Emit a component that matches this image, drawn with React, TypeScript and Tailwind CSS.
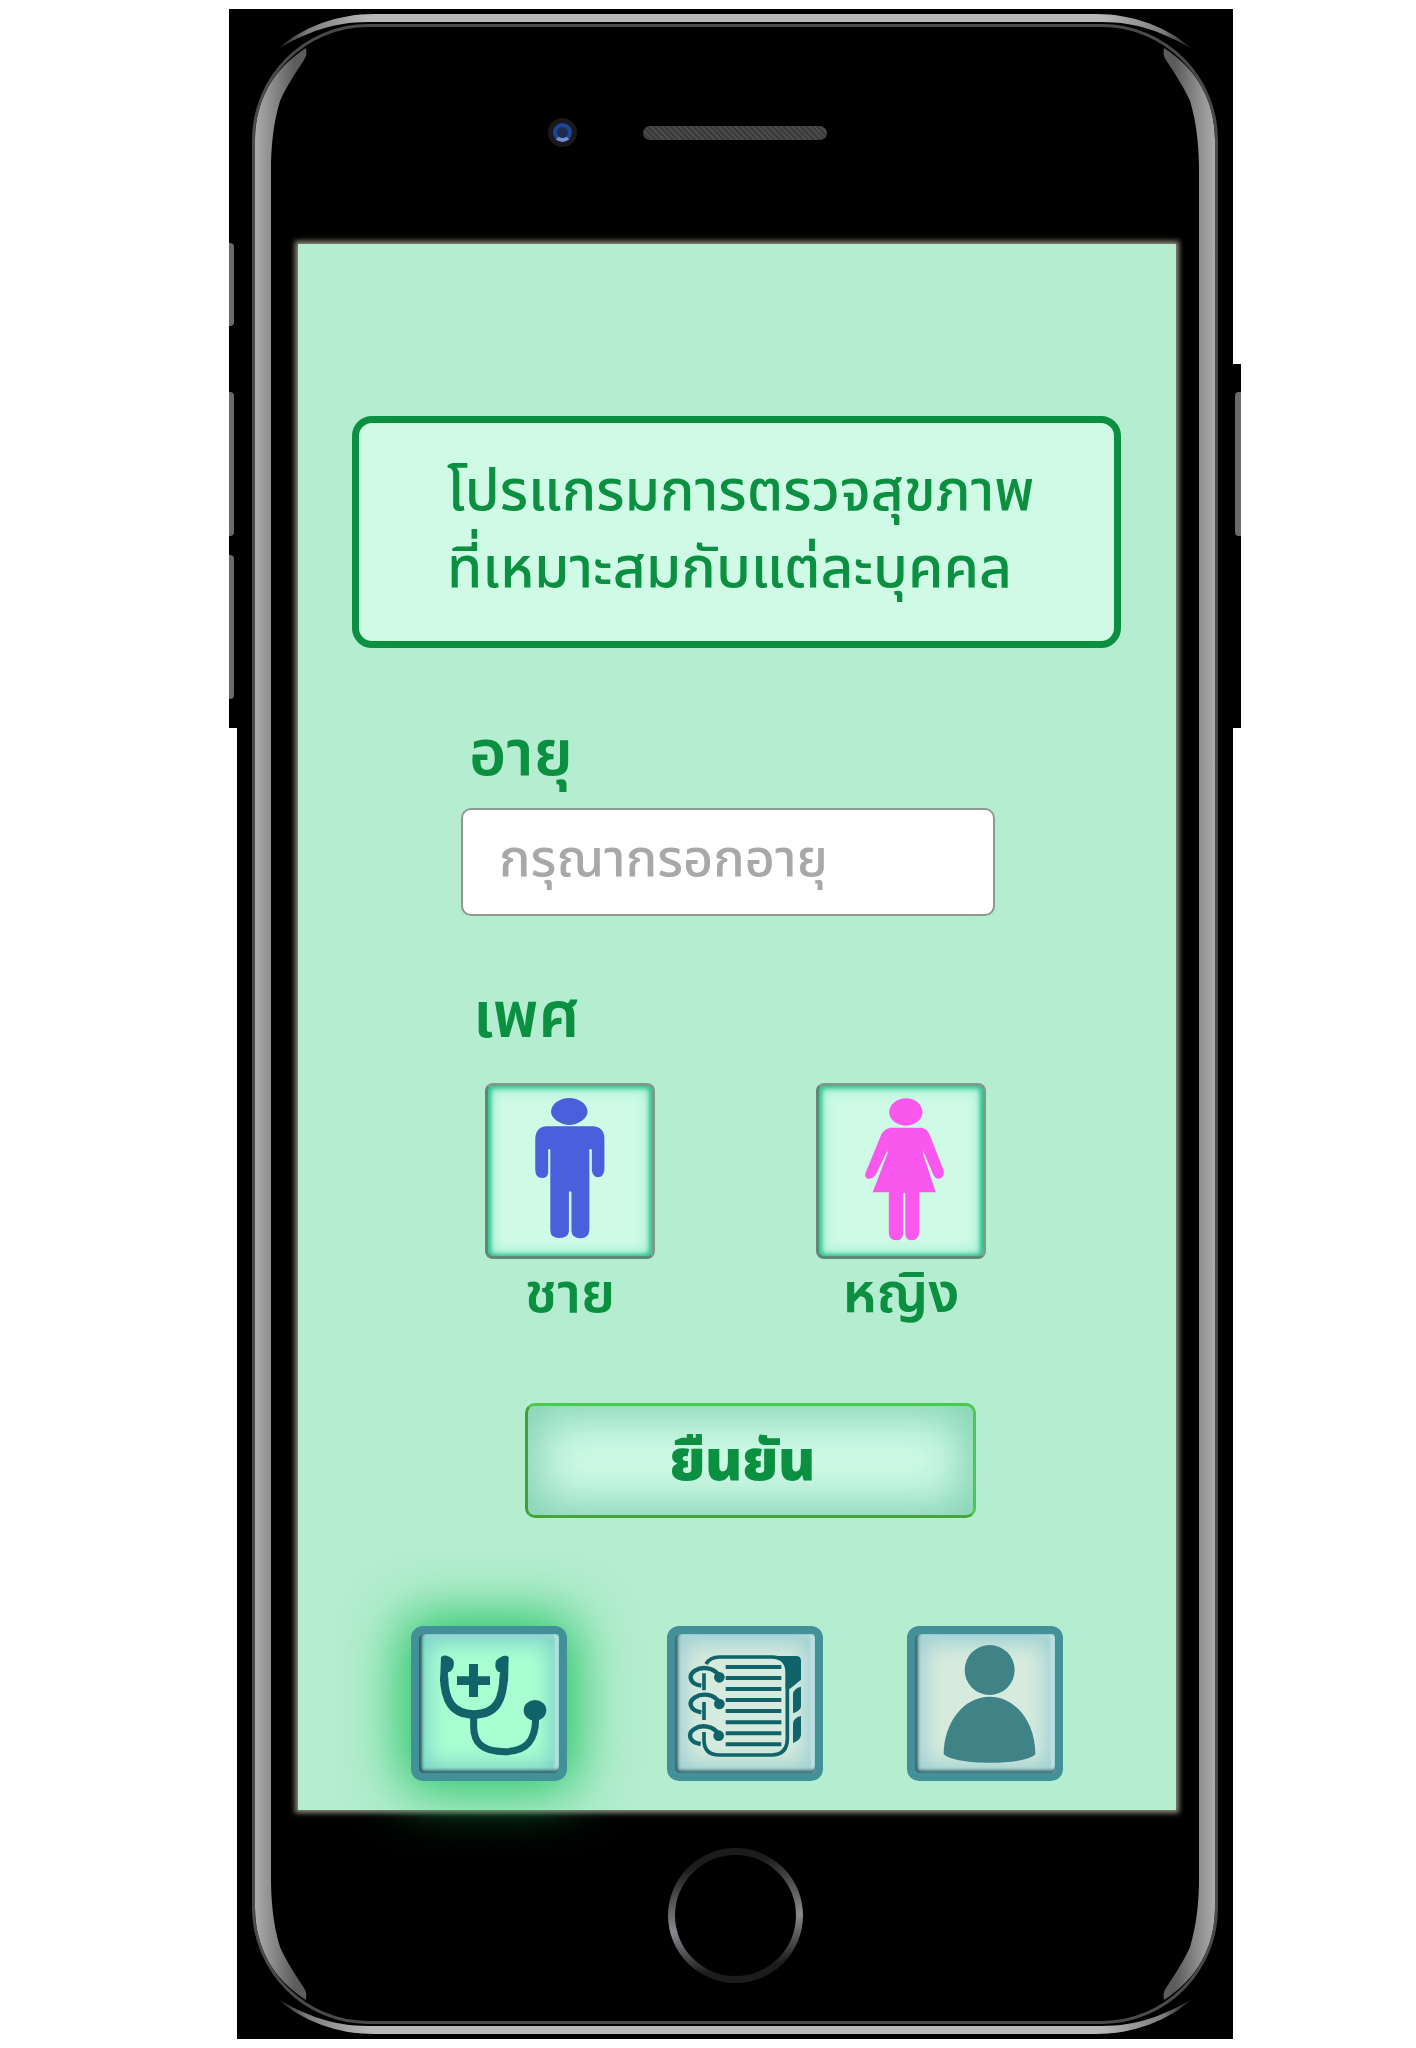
import type { ReactNode } from "react";

const corners = [
  { id: "tl", place: "left-0 top-0" },
  { id: "tr", place: "right-0 top-0 -scale-x-100" },
  { id: "bl", place: "bottom-0 left-0 -scale-y-100" },
  { id: "br", place: "bottom-0 right-0 -scale-100" },
];

function Corner({ id, place }: { id: string; place: string }) {
  return (
    <svg aria-hidden="true" viewBox="0 0 160 180" className={`absolute h-[180px] w-40 ${place}`}>
      <defs>
        <linearGradient id={`${id}-side`} gradientUnits="userSpaceOnUse" x1="18" y1="0" x2="68" y2="0">
          <stop offset="0" stopColor="#ababab" />
          <stop offset="0.32" stopColor="#8e8e8e" />
          <stop offset="0.8" stopColor="#5c5c5c" />
          <stop offset="1" stopColor="#5c5c5c" />
        </linearGradient>
        <linearGradient id={`${id}-edge`} gradientUnits="userSpaceOnUse" x1="43" y1="0" x2="131" y2="0">
          <stop offset="0" stopColor="#1c1c1c" />
          <stop offset="0.3" stopColor="#7c7c7c" />
          <stop offset="1" stopColor="#b9b7b9" />
        </linearGradient>
      </defs>
      <path d="M18 180V131C18 92 36 60 69 39C70 46 69 47 67 51C60 62 49 78 43 92C36 115 34 140 34 160V180Z" fill={`url(#${id}-side)`} />
      <path d="M16.5 180V131C16.5 68 68 16.5 131 16.5H160" fill="none" stroke="#4a4a4a" strokeWidth="3" />
      <path d="M160 5H137C100 5 65 18 41 40C68 24 96 13 131 13H160Z" fill={`url(#${id}-edge)`} />
    </svg>
  );
}

function PhoneFrame() {
  return (
    <>
      <div className="absolute inset-x-40 top-[5px] h-2 bg-[#b9b7b9]" />
      <div className="absolute inset-x-40 top-[15px] h-[3px] bg-[#4a4a4a]" />
      <div className="absolute inset-x-40 bottom-[5px] h-2 bg-[#b9b7b9]" />
      <div className="absolute inset-x-40 bottom-[15px] h-[3px] bg-[#4a4a4a]" />
      <div className="absolute inset-y-[180px] left-[15px] w-[19px] border-l-[3px] border-[#4a4a4a] bg-linear-to-r from-[#ababab] to-[#8e8e8e]" />
      <div className="absolute inset-y-[180px] right-[15px] w-[19px] border-r-[3px] border-[#4a4a4a] bg-linear-to-l from-[#ababab] to-[#8e8e8e]" />
      {corners.map((c) => (
        <Corner key={c.id} id={c.id} place={c.place} />
      ))}
    </>
  );
}

function ManIcon() {
  return (
    <svg aria-hidden="true" viewBox="78 77 458 510" preserveAspectRatio="none" className="size-full fill-[#4a5fdb]">
      <path d="M305 113C332 113 356 132 356 154C356 174 328 194 305 194C282 194 254 174 254 154C254 132 278 113 305 113Z" />
      <path d="M242 198H370Q403 200 403 235V330Q400 351 385 351Q370 350 368 330V268Q364 264 361 268V510Q360 533 336 534Q312 533 311 512V396Q307 390 304 396V512Q303 533 278 533Q252 533 252 510V268Q249 264 246 268V335Q245 353 229 353Q211 353 210 330V235Q211 200 242 198Z" />
    </svg>
  );
}

function WomanIcon() {
  return (
    <svg aria-hidden="true" viewBox="1005 77 458 510" preserveAspectRatio="none" className="size-full fill-[#f957ee]">
      <path d="M1248 114C1272 114 1294 132 1294 156C1294 178 1272 196 1248 196C1223 196 1201 178 1201 156C1201 132 1224 114 1248 114Z" />
      <path d="M1205 202H1292Q1305 204 1313 220L1353 330Q1357 350 1341 355Q1331 356 1325 345L1296 272Q1294 278 1296 282L1331 396H1285V515Q1283 539 1265 540Q1247 539 1246 520V400Q1243 394 1240 400V520Q1238 539 1220 540Q1201 539 1200 518V396H1155L1196 280L1197 272Q1192 278 1190 284L1165 340Q1155 357 1141 355Q1132 350 1134 340L1180 220Q1190 204 1205 202Z" />
    </svg>
  );
}

function StethoscopeIcon() {
  return (
    <svg aria-hidden="true" viewBox="147 162 420 417" className="size-full">
      <g fill="none" stroke="#11636a">
        <path d="M222 290C224 360 245 403 312 403C380 403 400 360 402 280" strokeWidth="25" />
        <path d="M311 408V440C311 498 350 515 405 515C460 515 497 490 497 415" strokeWidth="21" />
      </g>
      <g fill="#11636a">
        <path d="M213 232C220 222 238 226 250 240C256 260 245 276 234 277L233 305H210Z" />
        <path d="M416 232C408 222 390 230 378 242C373 260 378 275 391 277L388 305H414Z" />
        <ellipse cx="495" cy="391" rx="34" ry="31" />
        <path d="M297 252H324V289H360V315H324V351H297V315H261V289H297Z" />
      </g>
    </svg>
  );
}

function NotebookIcon() {
  const lines = [261, 294, 327, 360, 393, 427, 460, 493];
  const rings = ["translate(0 0)", "translate(0 80)", "translate(-2 175)"];
  return (
    <svg aria-hidden="true" viewBox="915 162 420 417" className="size-full">
      <g fill="none" stroke="#11636a">
        <path d="M1008 252C1015 240 1028 231 1048 231H1205Q1252 231 1252 280V475Q1252 525 1205 525H1048Q1002 525 1002 480V456M1002 280V331M1002 366V420" strokeWidth="11" />
        {lines.map((y) => (
          <path key={y} d={`M1067 ${y}H1234`} strokeWidth="12" />
        ))}
        {rings.map((t) => (
          <path key={t} transform={t} d="M994 317C960 312 952 287 975 272C996 258 1032 262 1047 287" strokeWidth="13" />
        ))}
      </g>
      <g fill="#11636a">
        {rings.map((t) => (
          <circle key={t} transform={t} cx="1048" cy="292" r="16" />
        ))}
        <path d="M1215 228H1278Q1293 228 1293 243V299L1260 326H1247V270Q1245 243 1215 233Z" />
        <path d="M1269 342Q1271 325 1293 320V380Q1290 392 1269 400Z" />
        <path d="M1269 430Q1271 413 1293 408V465Q1290 482 1269 489Z" />
      </g>
    </svg>
  );
}

function PersonIcon() {
  return (
    <svg aria-hidden="true" viewBox="226 162 420 417" className="size-full fill-[#408386]">
      <circle cx="450" cy="270" r="75" />
      <path d="M312 522C312 430 370 350 450 350C530 350 587 430 587 522C560 557 340 557 312 522Z" />
    </svg>
  );
}

function GenderOption({ value, text, children }: { value: string; text: string; children: ReactNode }) {
  return (
    <label className="flex w-[170px] cursor-pointer flex-col items-center">
      <input type="radio" name="gender" value={value} className="sr-only" />
      <span className="h-44 w-full rounded-lg border-3 border-[#7a9c8c] border-b-[#5f8878] border-l-[#5f8878] bg-[#cefae6] shadow-[inset_3px_0_4px_#38c595,inset_-3px_0_4px_#38c595,inset_0_3px_4px_#5ad8ae,inset_0_-2px_4px_#5ad8ae,inset_0_0_14px_3px_#8fe9c8]">
        {children}
      </span>
      <span className="text-[56px] leading-[72px] font-semibold">{text}</span>
    </label>
  );
}

function NavButton({ label, active, children }: { label: string; active?: boolean; children: ReactNode }) {
  const look = active
    ? "mr-4 bg-[#a8ffd2] shadow-[0_0_55px_10px_#22c463,inset_4px_0_3px_-1px_#2f5f64,inset_0_-4px_3px_-1px_#3c6f74,inset_-5px_0_3px_-1px_#b5e6e4,inset_0_5px_3px_-1px_#94d8d4,inset_0_0_22px_8px_#7ccdc6]"
    : "bg-[#d6ebdd] shadow-[inset_4px_0_3px_-1px_#3c666b,inset_0_-4px_3px_-1px_#45757b,inset_-5px_0_3px_-1px_#c2e4e9,inset_0_5px_3px_-1px_#a9d8dc,inset_0_0_22px_8px_#98ccd1]";
  return (
    <button type="button" aria-label={label} aria-current={active ? "page" : undefined} className={`h-[155px] w-[156px] rounded-xl border-8 border-[#439198] ${look}`}>
      {children}
    </button>
  );
}

export default function App() {
  return (
    <div className="flex min-h-screen items-start bg-white pt-[9px] pr-[175px] pl-[229px] font-['Noto_Sans_Thai','Noto_Sans',sans-serif] text-[#0b9041]">
      <div className="flex h-[719px] w-2 shrink-0 flex-col bg-black pt-[234px]">
        <div className="h-[83px] w-[5px] rounded-r bg-[#6a6a6a]" />
        <div className="mt-[66px] h-36 w-[5px] rounded-r bg-[#6a6a6a]" />
        <div className="mt-[19px] h-36 w-[5px] rounded-r bg-[#6a6a6a]" />
      </div>

      <div className="relative min-w-0 flex-1 bg-black pr-[57px] pl-[61px]">
        <PhoneFrame />

        <div className="flex h-[235px] items-start gap-[66px] pt-[109px] pl-[250px]">
          <div className="grid size-[29px] shrink-0 place-items-center rounded-full bg-[#1b181b]">
            <div className="size-[19px] rounded-full border-4 border-[#1c4598] border-b-[#6f8fd0] bg-[#1d2c4c]" />
          </div>
          <div className="mt-2 h-3.5 w-[184px] rounded-full bg-[repeating-linear-gradient(45deg,#3a3a3a_0_2px,#4a4a4a_2px_4px)]" />
        </div>

        <main className="relative bg-[#b4edcf] pt-[172px] pb-[29px] shadow-[0_0_5px_3px_#8a8a7a]">
          <h1 className="mr-[55px] ml-[54px] flex h-[232px] items-center rounded-[20px] border-7 border-[#0b9041] bg-[#cefae6] pl-[88px] text-[57px] leading-[77px] font-medium whitespace-nowrap">
            <span>
              โปรแกรมการตรวจสุขภาพ
              <br />
              ที่เหมาะสมกับแต่ละบุคคล
            </span>
          </h1>

          <form className="flex flex-col pr-[181px] pl-[163px]" onSubmit={(e) => e.preventDefault()}>
            <label htmlFor="age" className="mt-[71px] mb-[15px] pl-2 text-[64px] leading-[74px] font-semibold">
              อายุ
            </label>
            <input id="age" inputMode="numeric" placeholder="กรุณากรอกอายุ" className="h-[108px] w-full rounded-[10px] border-2 border-[#8f9a94] bg-white px-9 pb-1 text-[52px] font-medium outline-none placeholder:text-[#a8a8a8]" />

            <fieldset className="mt-[60px]">
              <legend className="pb-[23px] pl-3 text-[64px] leading-[84px] font-semibold">เพศ</legend>
              <div className="flex justify-between pr-[9px] pl-6">
                <GenderOption value="male" text="ชาย">
                  <ManIcon />
                </GenderOption>
                <GenderOption value="female" text="หญิง">
                  <WomanIcon />
                </GenderOption>
              </div>
            </fieldset>

            <button type="submit" className="mt-[72px] ml-16 h-[115px] w-[451px] rounded-[10px] border-3 border-[#4ac850] border-b-[#43a53a] border-l-[#43a02c] bg-[#cefae6] pt-1 pr-4 text-[56px] leading-[100px] font-black shadow-[inset_0_0_45px_12px_#84d2b4]">
              ยืนยัน
            </button>
          </form>

          <nav className="mt-[108px] flex justify-between pr-[113px] pl-[113px]">
            <NavButton label="ตรวจสุขภาพ" active>
              <StethoscopeIcon />
            </NavButton>
            <NavButton label="บันทึก">
              <NotebookIcon />
            </NavButton>
            <NavButton label="โปรไฟล์">
              <PersonIcon />
            </NavButton>
          </nav>
        </main>

        <div className="flex h-[229px] justify-center pt-[38px] pr-1">
          <button type="button" aria-label="Home" className="size-[135px] rounded-full bg-[linear-gradient(172deg,#1c1c1c_15%,#8a888e_55%,#1c1c1c_85%)] p-[7px]">
            <span className="block size-full rounded-full bg-black" />
          </button>
        </div>
      </div>

      <div className="mt-[355px] flex h-[364px] w-2 shrink-0 justify-end bg-black pt-7">
        <div className="h-36 w-[6px] rounded-l bg-[#6a6a6a]" />
      </div>
    </div>
  );
}
